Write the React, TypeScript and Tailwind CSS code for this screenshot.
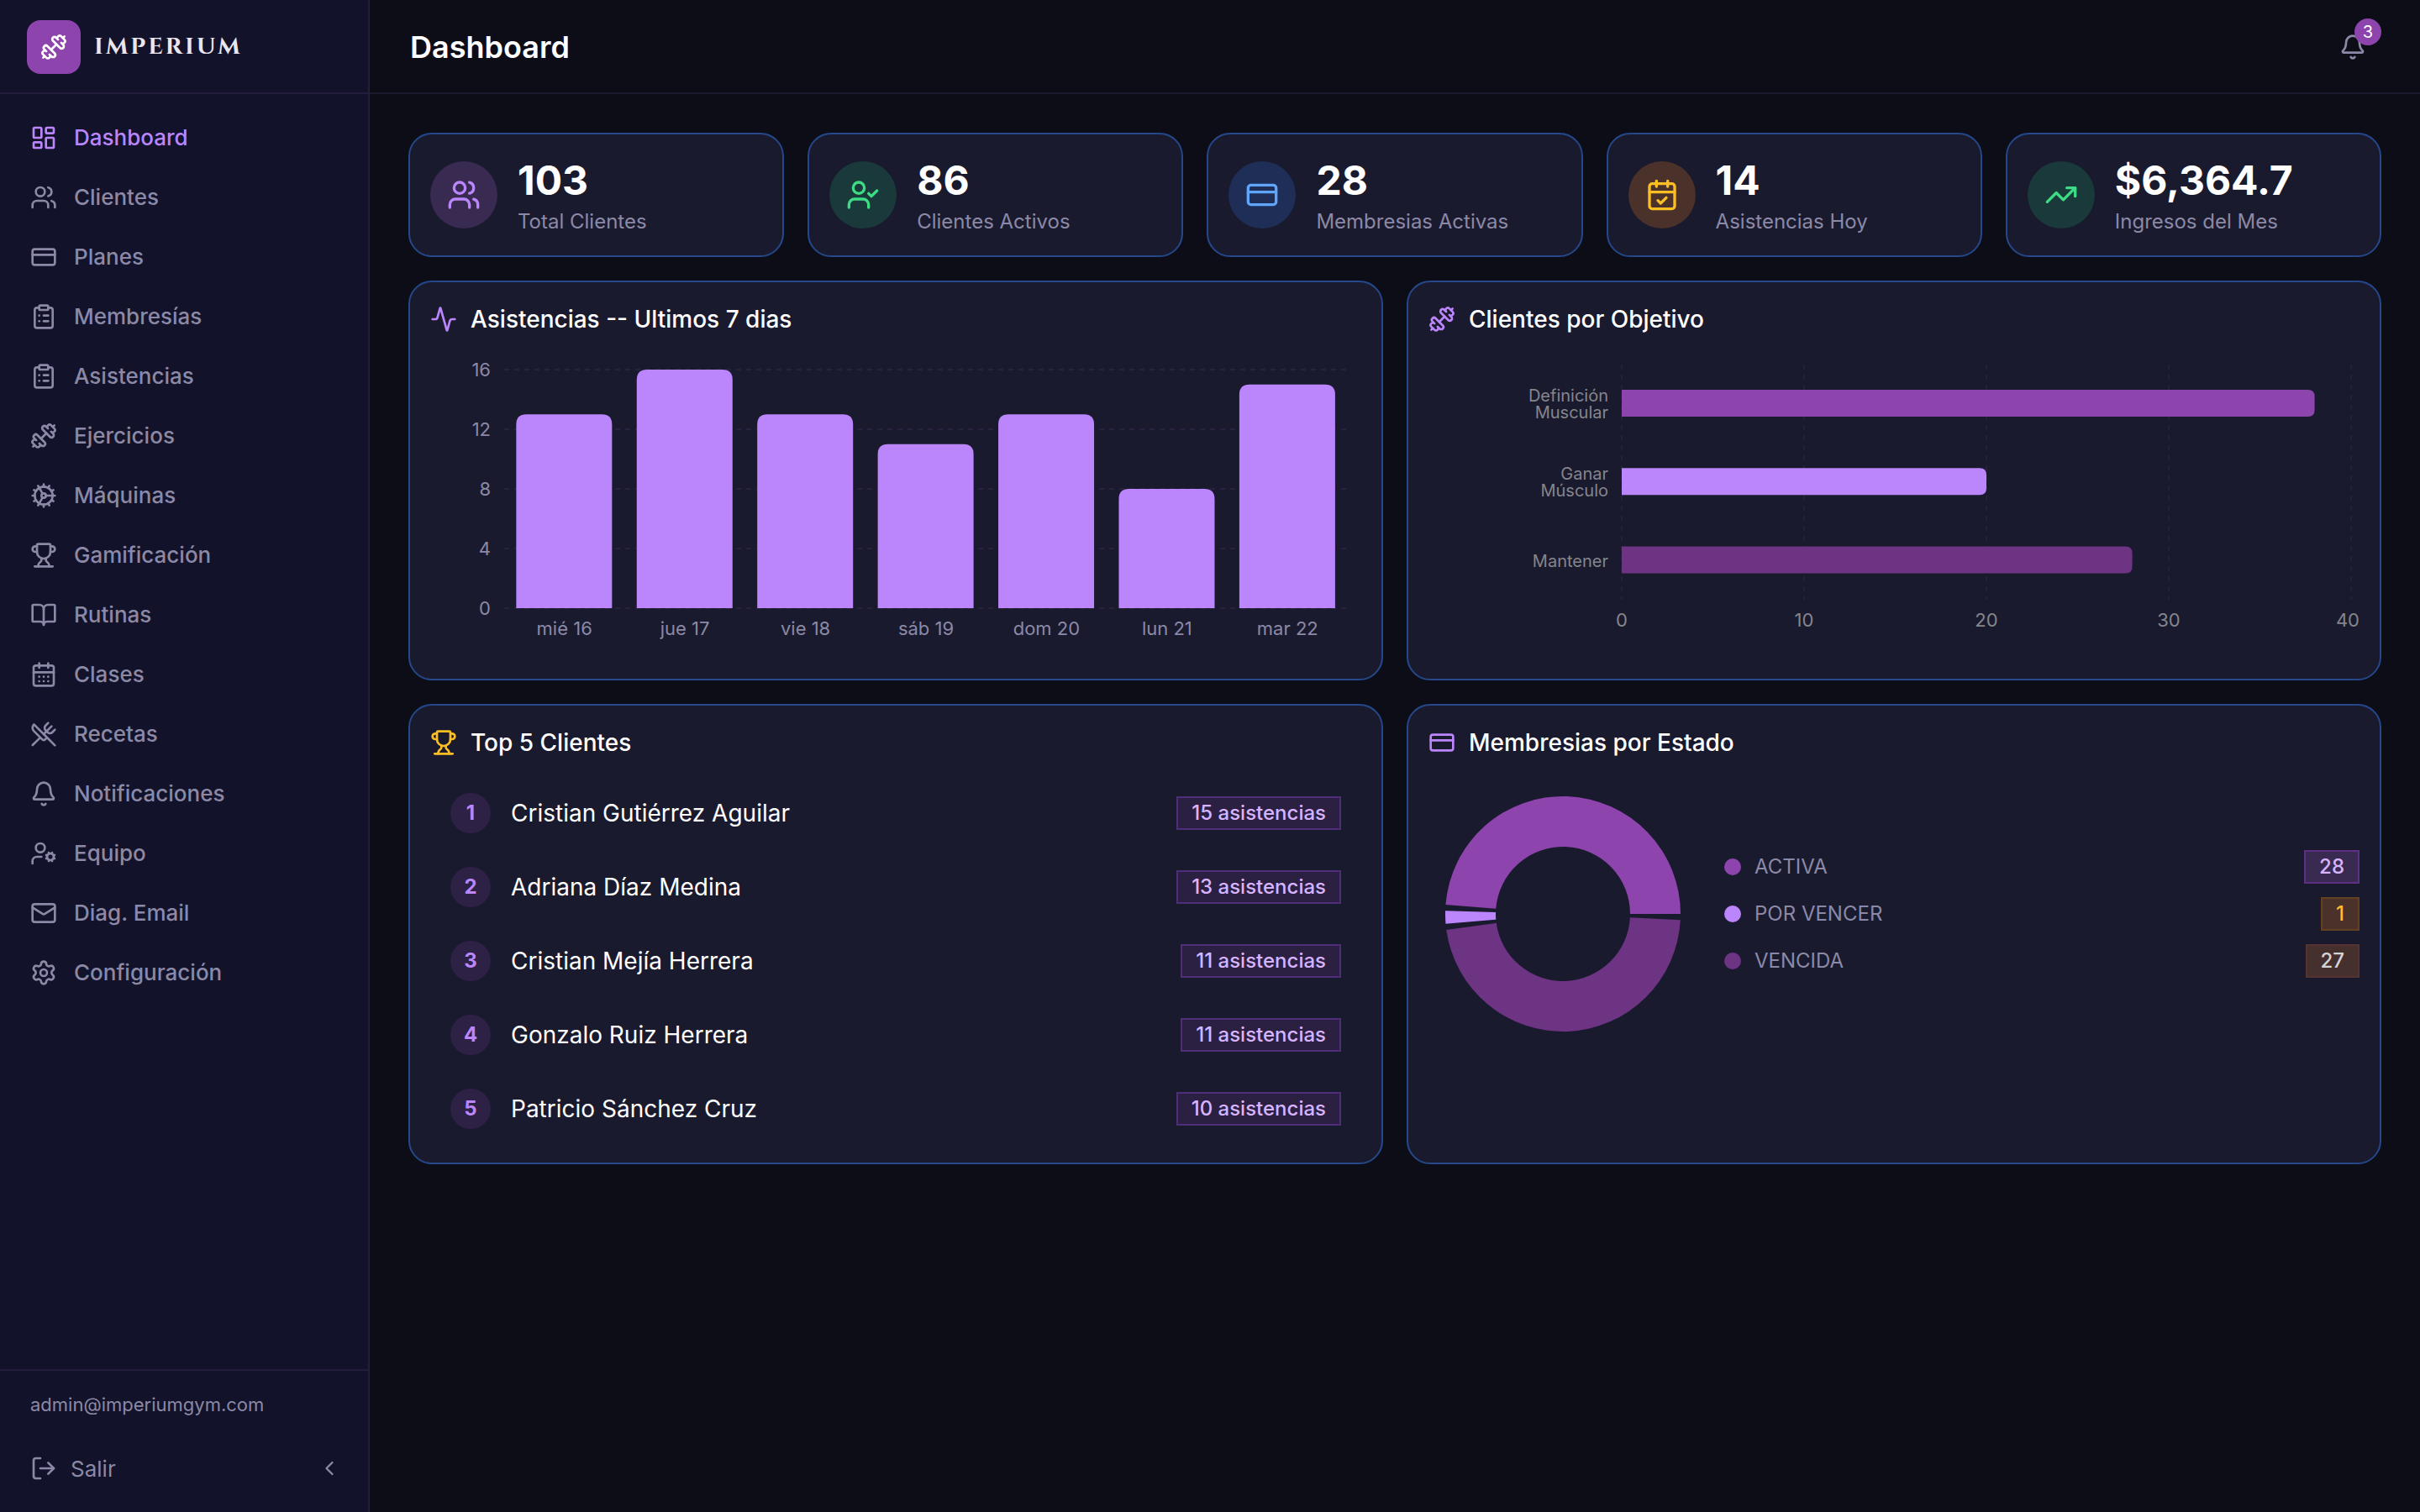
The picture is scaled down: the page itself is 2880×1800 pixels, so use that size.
import {
  Activity,
  Bell,
  BookOpen,
  CalendarCheck,
  CalendarDays,
  ChevronLeft,
  ClipboardList,
  Cog,
  CreditCard,
  Dumbbell,
  LayoutDashboard,
  LogOut,
  Mail,
  Settings,
  TrendingUp,
  Trophy,
  UserCheck,
  UserCog,
  Users,
  UtensilsCrossed,
  type LucideIcon,
} from "lucide-react";
import clsx from "clsx";
import type { ReactNode } from "react";

const navItems: { label: string; icon: LucideIcon; active?: boolean }[] = [
  { label: "Dashboard", icon: LayoutDashboard, active: true },
  { label: "Clientes", icon: Users },
  { label: "Planes", icon: CreditCard },
  { label: "Membresías", icon: ClipboardList },
  { label: "Asistencias", icon: ClipboardList },
  { label: "Ejercicios", icon: Dumbbell },
  { label: "Máquinas", icon: Cog },
  { label: "Gamificación", icon: Trophy },
  { label: "Rutinas", icon: BookOpen },
  { label: "Clases", icon: CalendarDays },
  { label: "Recetas", icon: UtensilsCrossed },
  { label: "Notificaciones", icon: Bell },
  { label: "Equipo", icon: UserCog },
  { label: "Diag. Email", icon: Mail },
  { label: "Configuración", icon: Settings },
];

const stats: { value: string; label: string; icon: LucideIcon; tone: string }[] = [
  { value: "103", label: "Total Clientes", icon: Users, tone: "bg-[#382a50] text-[#bb86fc]" },
  { value: "86", label: "Clientes Activos", icon: UserCheck, tone: "bg-[#1a393b] text-[#3ddc84]" },
  { value: "28", label: "Membresias Activas", icon: CreditCard, tone: "bg-[#1f2e57] text-[#60a5fa]" },
  { value: "14", label: "Asistencias Hoy", icon: CalendarCheck, tone: "bg-[#4a3129] text-[#fbbf24]" },
  { value: "$6,364.7", label: "Ingresos del Mes", icon: TrendingUp, tone: "bg-[#1a393b] text-[#3ddc84]" },
];

const attendance = [
  { day: "mié 16", total: 13 },
  { day: "jue 17", total: 16 },
  { day: "vie 18", total: 13 },
  { day: "sáb 19", total: 11 },
  { day: "dom 20", total: 13 },
  { day: "lun 21", total: 8 },
  { day: "mar 22", total: 15 },
];

const goals = [
  { lines: ["Definición", "Muscular"], total: 38, color: "#8e44ad" },
  { lines: ["Ganar", "Músculo"], total: 20, color: "#bb86fc" },
  { lines: ["Mantener"], total: 28, color: "#6c3483" },
];

const topClients = [
  { name: "Cristian Gutiérrez Aguilar", visits: 15 },
  { name: "Adriana Díaz Medina", visits: 13 },
  { name: "Cristian Mejía Herrera", visits: 11 },
  { name: "Gonzalo Ruiz Herrera", visits: 11 },
  { name: "Patricio Sánchez Cruz", visits: 10 },
];

const memberships = [
  { status: "ACTIVA", total: 28, color: "#8e44ad", badge: "border-[#5f2f82] bg-[#382a50] text-[#d8b4fe]" },
  { status: "POR VENCER", total: 1, color: "#bb86fc", badge: "border-[#63401f] bg-[#4a3129] text-[#fbbf24]" },
  { status: "VENCIDA", total: 27, color: "#6c3483", badge: "border-[#56332f] bg-[#45302e] text-[#d4d4d8]" },
];

function Sidebar() {
  return (
    <aside className="flex w-[440px] shrink-0 flex-col border-r-2 border-[#231f3a] bg-[#12122a] text-[#8b89a6]">
      <div className="flex h-28 shrink-0 items-center gap-4 border-b-2 border-[#231c3a] px-8 pt-0.5">
        <div className="flex size-16 items-center justify-center rounded-2xl bg-[#8e44ad] text-white">
          <Dumbbell size={32} />
        </div>
        <span className="font-['Cinzel','Liberation_Serif',serif] text-[28px] font-bold tracking-widest text-[#e9e6ee]">
          IMPERIUM
        </span>
      </div>
      <nav className="flex flex-col px-9 py-4">
        {navItems.map(({ label, icon: Icon, active }) => (
          <a
            key={label}
            href="#"
            aria-current={active ? "page" : undefined}
            className={clsx("flex h-[71px] items-center gap-5 text-[26px] font-medium", active && "text-[#bb86fc]")}
          >
            <Icon size={32} />
            {label}
          </a>
        ))}
      </nav>
      <div className="mt-auto border-t-2 border-[#231c3a] pt-6 pb-5">
        <p className="px-9 text-[22px] leading-8">admin@imperiumgym.com</p>
        <div className="mt-7 flex items-center justify-between pr-[18px] pl-9">
          <button className="flex h-16 items-center gap-4 text-[26px]">
            <LogOut size={32} />
            Salir
          </button>
          <button aria-label="Contraer menú" className="flex size-14 items-center justify-center">
            <ChevronLeft size={28} />
          </button>
        </div>
      </div>
    </aside>
  );
}

function Card({ icon, title, children }: { icon: ReactNode; title: string; children: ReactNode }) {
  return (
    <section className="rounded-[28px] border-2 border-[#24488a] bg-[#1a1a2e] p-6">
      <h2 className="flex h-10 items-center gap-4 text-[28px] font-medium">
        {icon}
        {title}
      </h2>
      <div className="mt-6">{children}</div>
    </section>
  );
}

function AttendanceChart() {
  const band = 1004 / attendance.length;
  return (
    <svg viewBox="0 0 1108 360" className="block w-full" role="img" aria-label="Asistencias por día">
      {[16, 12, 8, 4, 0].map((tick, i) => (
        <g key={tick}>
          <line x1={88} x2={1092} y1={16 + i * 71} y2={16 + i * 71} stroke="#28213f" strokeWidth={2} strokeDasharray="6 6" />
          <text x={72} y={24 + i * 71} textAnchor="end" fontSize={22} fill="#8b89a6">
            {tick}
          </text>
        </g>
      ))}
      {attendance.map(({ day, total }, i) => {
        const x = 88 + band * i + band * 0.1;
        const y = 300 - total * 17.75;
        return (
          <g key={day}>
            <path d={`M${x} 300V${y + 12}q0-12 12-12h90q12 0 12 12V300z`} fill="#bb86fc" />
            <text x={88 + band * (i + 0.5)} y={332} textAnchor="middle" fontSize={22} fill="#8b89a6">
              {day}
            </text>
          </g>
        );
      })}
    </svg>
  );
}

function GoalsChart() {
  return (
    <svg viewBox="0 0 1108 360" className="block w-full" role="img" aria-label="Clientes por objetivo">
      {[0, 10, 20, 30, 40].map((tick) => (
        <g key={tick}>
          <line x1={230 + tick * 21.7} x2={230 + tick * 21.7} y1={10} y2={290} stroke="#222237" strokeWidth={2} strokeDasharray="6 6" />
          <text
            x={tick === 40 ? 1108 : 230 + tick * 21.7}
            y={322}
            textAnchor={tick === 40 ? "end" : "middle"}
            fontSize={22}
            fill="#85858c"
          >
            {tick}
          </text>
        </g>
      ))}
      {goals.map(({ lines, total, color }, i) => {
        const cy = 56 + i * 93.3;
        const w = total * 21.7;
        return (
          <g key={lines[0]}>
            <path d={`M230 ${cy - 16}h${w - 8}q8 0 8 8v16q0 8-8 8h${8 - w}z`} fill={color} />
            {lines.map((line, n) => (
              <text
                key={line}
                x={214}
                y={cy + 8 + (n - (lines.length - 1) / 2) * 20}
                textAnchor="end"
                fontSize={20}
                fill="#85858c"
              >
                {line}
              </text>
            ))}
          </g>
        );
      })}
    </svg>
  );
}

function point(radius: number, degrees: number) {
  const a = (degrees * Math.PI) / 180;
  return `${160 + radius * Math.cos(a)} ${160 - radius * Math.sin(a)}`;
}

function Donut() {
  const gap = 3;
  const sum = memberships.reduce((acc, m) => acc + m.total, 0);
  let start = 0;
  return (
    <svg viewBox="0 0 320 320" className="size-80 shrink-0" role="img" aria-label="Membresias por estado">
      {memberships.map(({ status, total, color }) => {
        const end = start + (total / sum) * (360 - gap * memberships.length);
        const d = `M${point(140, start)}A140 140 0 0 0 ${point(140, end)}L${point(80, end)}A80 80 0 0 1 ${point(80, start)}z`;
        start = end + gap;
        return <path key={status} d={d} fill={color} />;
      })}
    </svg>
  );
}

function Badge({ className, children }: { className: string; children: ReactNode }) {
  return (
    <span className={clsx("flex h-10 items-center border-2 px-4 text-[24px] font-medium", className)}>{children}</span>
  );
}

export default function App() {
  return (
    <div className="flex min-h-screen bg-[#0d0d18] font-['Inter',sans-serif] text-white">
      <Sidebar />
      <div className="min-w-0 flex-1">
        <header className="flex h-28 items-center justify-between border-b-2 border-[#1a1a2e] px-12 pt-0.5">
          <h1 className="text-[36px] font-semibold">Dashboard</h1>
          <button aria-label="Notificaciones" className="relative flex size-16 items-center justify-center text-[#8b89a6]">
            <Bell size={32} />
            <span className="absolute -top-0.5 -right-0.5 flex size-8 items-center justify-center rounded-full bg-[#8e44ad] text-[20px] text-white">
              3
            </span>
          </button>
        </header>
        <main className="flex flex-col gap-7 p-[46px]">
          <div className="grid grid-cols-5 gap-7">
            {stats.map(({ value, label, icon: Icon, tone }) => (
              <div
                key={label}
                className="flex h-[148px] items-center gap-6 rounded-[28px] border-2 border-[#24488a] bg-[#1a1a2e] px-6"
              >
                <div className={clsx("flex size-20 shrink-0 items-center justify-center rounded-full", tone)}>
                  <Icon size={40} />
                </div>
                <div>
                  <p className="text-[48px] leading-[64px] font-bold">{value}</p>
                  <p className="text-[24px] leading-[34px] text-[#8b89a6]">{label}</p>
                </div>
              </div>
            ))}
          </div>
          <div className="grid grid-cols-2 gap-7">
            <Card icon={<Activity size={32} className="text-[#bb86fc]" />} title="Asistencias -- Ultimos 7 dias">
              <AttendanceChart />
            </Card>
            <Card icon={<Dumbbell size={32} className="text-[#bb86fc]" />} title="Clientes por Objetivo">
              <GoalsChart />
            </Card>
            <Card icon={<Trophy size={32} className="text-[#fbbf24]" />} title="Top 5 Clientes">
              <ol className="flex flex-col gap-2">
                {topClients.map(({ name, visits }, i) => (
                  <li key={name} className="flex h-20 items-center gap-6 px-6">
                    <span className="flex size-12 items-center justify-center rounded-full bg-[#2d2145] text-[24px] font-bold text-[#bb86fc]">
                      {i + 1}
                    </span>
                    <span className="flex-1 text-[28px]">{name}</span>
                    <Badge className="border-[#4f2d77] bg-[#2b2042] text-[#d8b4fe]">{visits} asistencias</Badge>
                  </li>
                ))}
              </ol>
            </Card>
            <Card icon={<CreditCard size={32} className="text-[#bb86fc]" />} title="Membresias por Estado">
              <div className="flex items-center gap-8">
                <Donut />
                <ul className="flex flex-1 flex-col gap-4">
                  {memberships.map(({ status, total, color, badge }) => (
                    <li key={status} className="flex items-center gap-4">
                      <span className="size-5 rounded-full" style={{ backgroundColor: color }} />
                      <span className="flex-1 text-[24px] text-[#8b89a6]">{status}</span>
                      <Badge className={badge}>{total}</Badge>
                    </li>
                  ))}
                </ul>
              </div>
            </Card>
          </div>
        </main>
      </div>
    </div>
  );
}
